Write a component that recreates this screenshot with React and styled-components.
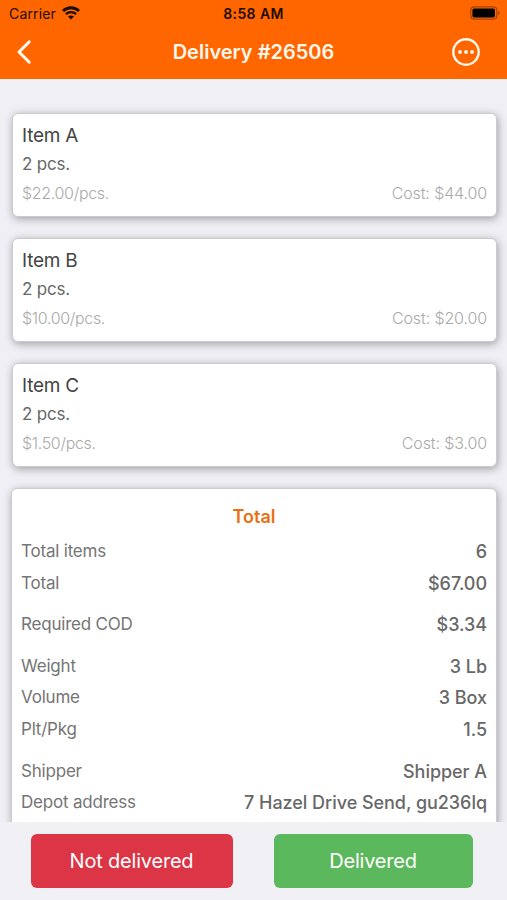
import React from 'react';
import styled, { createGlobalStyle } from 'styled-components';

const GlobalStyle = createGlobalStyle`
  * {
    box-sizing: border-box;
  }

  body {
    margin: 0;
    background-color: #f0eff5;
    font-family: Inter, "Liberation Sans", sans-serif;
  }
`;

const Screen = styled.div`
  height: 100vh;
  display: flex;
  flex-direction: column;
  overflow: hidden;
`;

const Header = styled.header`
  height: 79px;
  flex: none;
  background-color: #ff6600;
`;

const StatusBar = styled.div`
  height: 27px;
  padding: 0 7px 0 8px;
  display: grid;
  grid-template-columns: 1fr auto 1fr;
  align-items: center;
  color: #1d0c00;
`;

const Carrier = styled.div`
  display: flex;
  align-items: center;
  gap: 6px;
  padding-left: 1px;
  font-size: 14px;
  letter-spacing: 0.15px;

  svg {
    margin-bottom: 2px;
  }
`;

const Time = styled.div`
  margin-right: 1px;
  font-size: 14px;
  font-weight: 600;
  letter-spacing: 0.4px;
`;

const BatteryIcon = styled.svg`
  justify-self: end;
  margin-bottom: 1px;
`;

const NavBar = styled.div`
  height: 50px;
  padding: 0 27px 0 16px;
  display: grid;
  grid-template-columns: 1fr auto 1fr;
  align-items: center;
`;

const NavButton = styled.button`
  display: flex;
  padding: 0;
  border: none;
  background: none;
  color: #fff8ee;
  cursor: pointer;
  justify-self: ${(props) => props.$side};
`;

const Title = styled.h1`
  margin: 0 0 0 11px;
  color: #fff8ee;
  font-size: 20px;
  font-weight: 600;
`;

const Content = styled.main`
  flex: 1;
  min-height: 0;
  padding: 34px 10px 0 12px;
  overflow: hidden;
`;

const Card = styled.section`
  background-color: #fff;
  border: 1px solid #cbcbce;
  border-radius: 6px;
  box-shadow: 1px 2px 9px rgba(0, 0, 0, 0.34);
`;

const ItemCard = styled(Card)`
  height: 104px;
  margin-bottom: 21px;
  padding: 8px 9px 0;
`;

const ItemName = styled.div`
  color: #454545;
  font-size: 19px;
  line-height: 28px;
  letter-spacing: -0.25px;
`;

const ItemCount = styled.div`
  color: #686868;
  font-size: 17px;
  line-height: 29px;
  letter-spacing: -0.2px;
`;

const ItemPrices = styled.div`
  display: flex;
  justify-content: space-between;
  color: #aaa;
  font-size: 16px;
  font-weight: 300;
  line-height: 28px;
`;

const Price = styled.span`
  letter-spacing: -0.33px;
`;

const Cost = styled.span`
  letter-spacing: -0.12px;
`;

const TotalCard = styled(Card)`
  height: 500px;
  margin-left: -1px;
  padding: 12px 9px 0;
`;

const TotalTitle = styled.h2`
  margin: 0 0 3px;
  color: #e87010;
  font-size: 18px;
  font-weight: 600;
  line-height: 32px;
  text-align: center;
`;

const Group = styled.div`
  margin-bottom: 9.6px;
`;

const Row = styled.div`
  display: flex;
  justify-content: space-between;
  line-height: 31.8px;
`;

const Label = styled.span`
  color: #757575;
  font-size: 17px;
  letter-spacing: -0.2px;
`;

const Value = styled.span`
  color: #686868;
  font-size: 18px;
  font-weight: 500;
  letter-spacing: -0.04px;
`;

const Footer = styled.footer`
  height: 78px;
  flex: none;
  padding: 12px 34px 0 31px;
  display: flex;
  justify-content: space-between;
  background-color: #f0f0f5;
`;

const ActionButton = styled.button`
  width: ${(props) => props.$width};
  height: 54px;
  padding: 0 1px 0 0;
  border: none;
  border-radius: 6px;
  background-color: ${(props) => props.$color};
  color: #fff;
  font-family: inherit;
  font-size: 20px;
  letter-spacing: -0.2px;
  cursor: pointer;
`;

const items = [
  { name: 'Item A', count: '2 pcs.', price: '$22.00/pcs.', cost: 'Cost: $44.00' },
  { name: 'Item B', count: '2 pcs.', price: '$10.00/pcs.', cost: 'Cost: $20.00' },
  { name: 'Item C', count: '2 pcs.', price: '$1.50/pcs.', cost: 'Cost: $3.00' },
];

const totals = [
  [
    ['Total items', '6'],
    ['Total', '$67.00'],
  ],
  [['Required COD', '$3.34']],
  [
    ['Weight', '3 Lb'],
    ['Volume', '3 Box'],
    ['Plt/Pkg', '1.5'],
  ],
  [
    ['Shipper', 'Shipper A'],
    ['Depot address', '7 Hazel Drive Send, gu236lq'],
  ],
];

const Wifi = () => (
  <svg width="18" height="16" viewBox="0 0 18 16" fill="none" stroke="currentColor">
    <path d="M1 6C5.5 1.6 12.5 1.6 17 6" strokeWidth="2.9" />
    <path d="M3.9 9.1C6.8 6.4 11.2 6.4 14.1 9.1" strokeWidth="2.4" />
    <path d="M6 11.5C7.7 10 10.3 10 12 11.5L9 14.5Z" fill="currentColor" stroke="none" />
  </svg>
);

const Battery = () => (
  <BatteryIcon width="30" height="14" viewBox="0 0 30 14">
    <rect x="0.8" y="0.8" width="26" height="12.4" rx="3.4" fill="none" stroke="#a64300" strokeWidth="1.2" />
    <rect x="2.4" y="2.4" width="22.6" height="9.2" rx="1.8" fill="#000" />
    <path d="M28 5C30 5.5 30 8.5 28 9Z" fill="#a64300" />
  </BatteryIcon>
);

const App = () => {
  return (
    <>
      <GlobalStyle />
      <Screen>
        <Header>
          <StatusBar>
            <Carrier>Carrier <Wifi /></Carrier>
            <Time>8:58 AM</Time>
            <Battery />
          </StatusBar>
          <NavBar>
            <NavButton $side="start" aria-label="Back">
              <svg width="16" height="26" viewBox="0 0 16 26" fill="none" stroke="currentColor" strokeWidth="3">
                <path d="M13.3 2.8L3 13L13.3 23.2" strokeLinecap="round" strokeLinejoin="round" />
              </svg>
            </NavButton>
            <Title>Delivery #26506</Title>
            <NavButton $side="end" aria-label="More">
              <svg width="28" height="28" viewBox="0 0 28 28" fill="currentColor">
                <circle cx="14" cy="14" r="12.7" fill="none" stroke="currentColor" strokeWidth="2.4" />
                <circle cx="8" cy="14" r="1.9" />
                <circle cx="14" cy="14" r="1.9" />
                <circle cx="20" cy="14" r="1.9" />
              </svg>
            </NavButton>
          </NavBar>
        </Header>
        <Content>
          {items.map((item) => (
            <ItemCard key={item.name}>
              <ItemName>{item.name}</ItemName>
              <ItemCount>{item.count}</ItemCount>
              <ItemPrices>
                <Price>{item.price}</Price>
                <Cost>{item.cost}</Cost>
              </ItemPrices>
            </ItemCard>
          ))}
          <TotalCard>
            <TotalTitle>Total</TotalTitle>
            {totals.map((rows) => (
              <Group key={rows[0][0]}>
                {rows.map(([label, value]) => (
                  <Row key={label}>
                    <Label>{label}</Label>
                    <Value>{value}</Value>
                  </Row>
                ))}
              </Group>
            ))}
          </TotalCard>
        </Content>
        <Footer>
          <ActionButton $width="202px" $color="#dc3545">Not delivered</ActionButton>
          <ActionButton $width="199px" $color="#5cb85c">Delivered</ActionButton>
        </Footer>
      </Screen>
    </>
  );
};

export default App;
